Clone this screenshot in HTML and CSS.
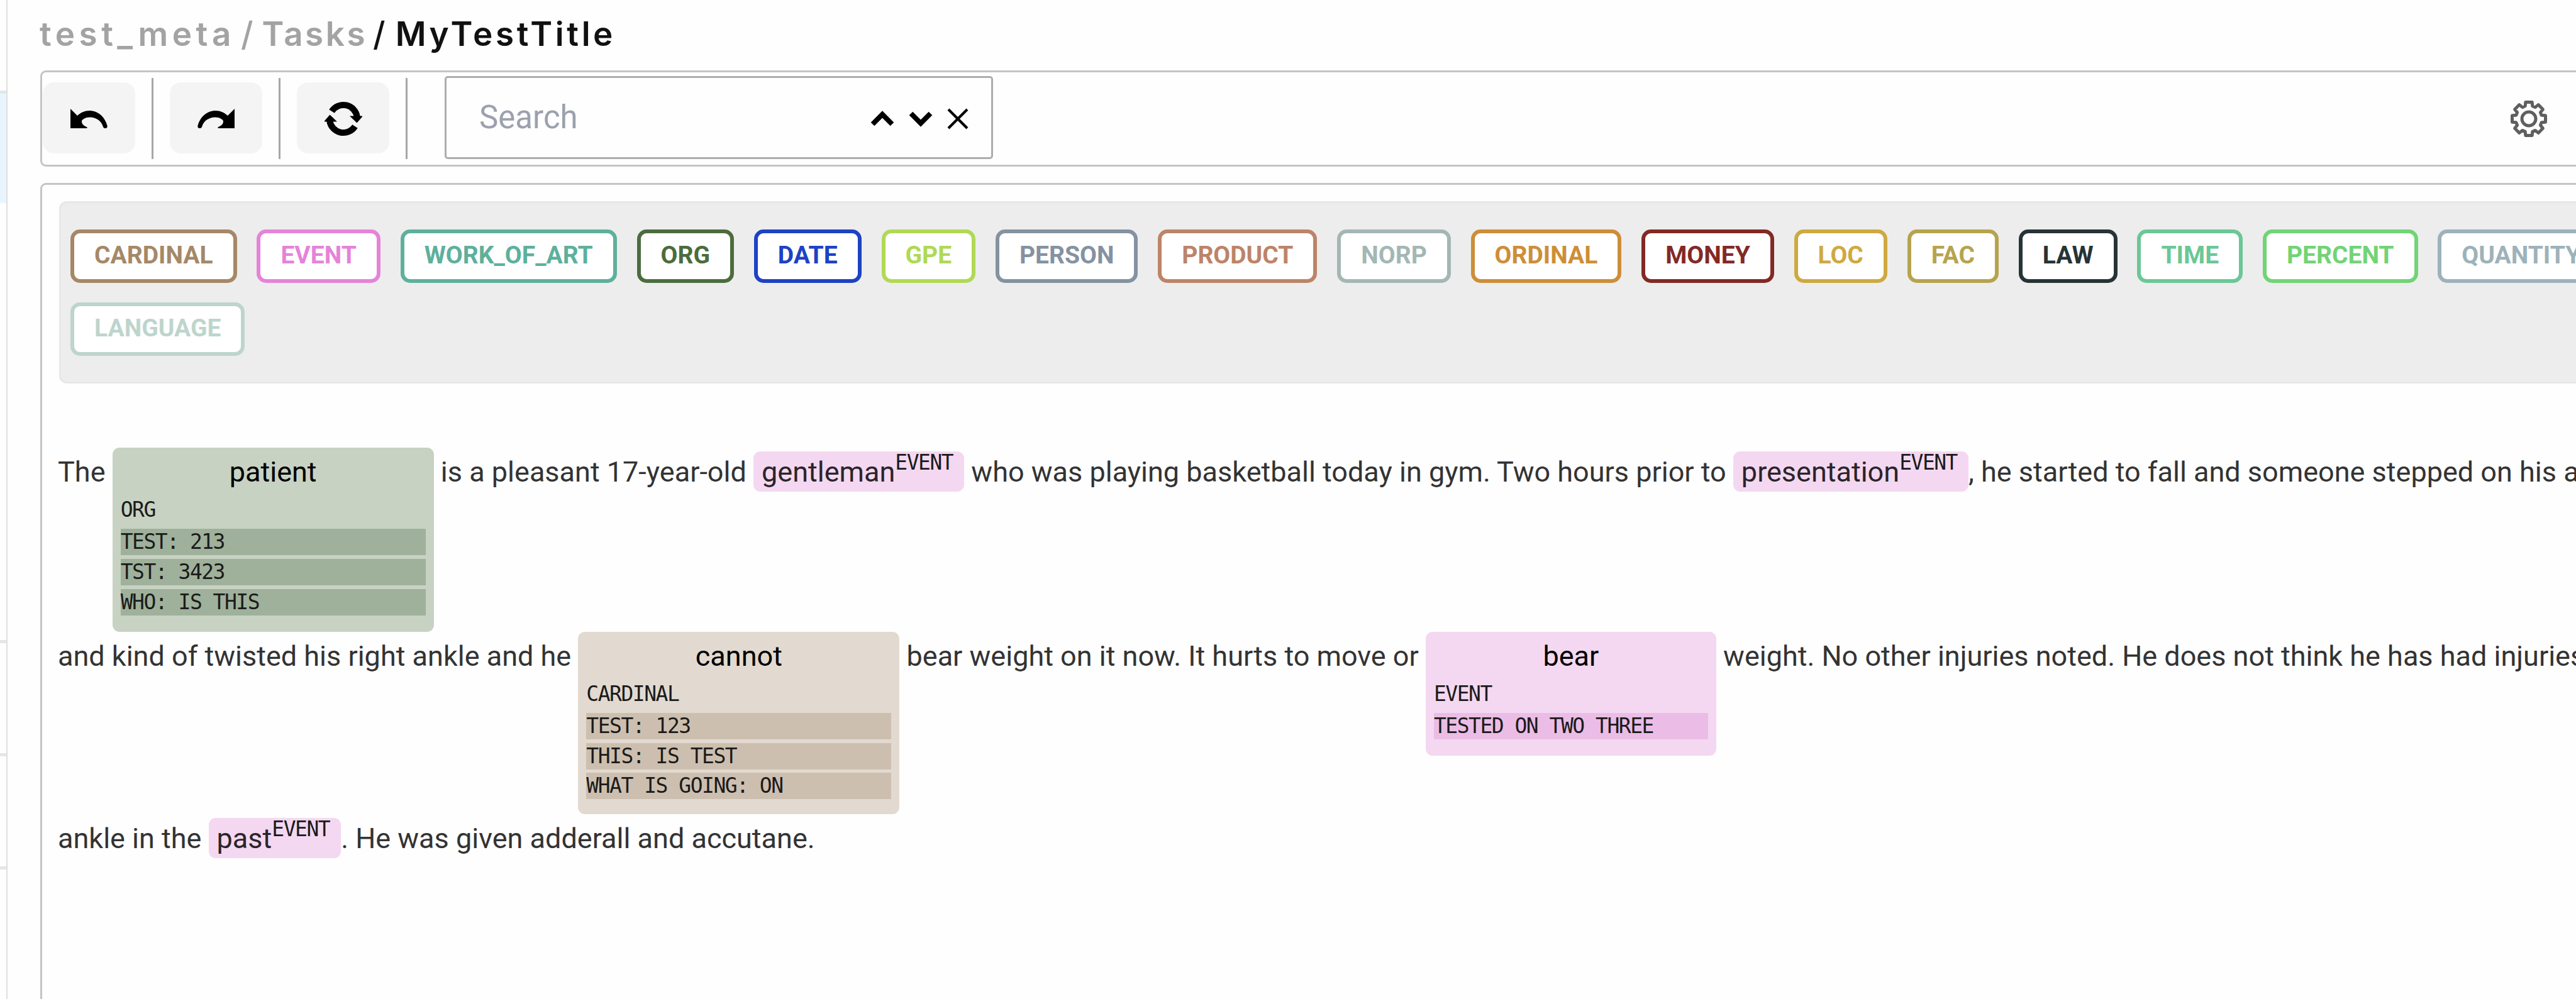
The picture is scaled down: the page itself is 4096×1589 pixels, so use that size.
FILE: index.html
```html
<!DOCTYPE html>
<html lang="en">
<head>
<meta charset="utf-8">
<title>MyTestTitle</title>
<link rel="stylesheet" href="styles.css">
</head>
<body>
<aside class="sidebar">
  <div class="side-item side-first"></div>
  <div class="side-item side-active"></div>
  <div class="side-item side-tall"></div>
  <div class="side-item"></div>
  <div class="side-item"></div>
</aside>
<main class="main">
  <nav class="crumbs">
    <span class="crumb crumb-project">test_meta</span><span class="slash">/</span><span class="crumb">Tasks</span><span class="slash current">/</span><span class="crumb crumb-title current">MyTestTitle</span>
  </nav>

  <div class="toolbar">
    <button class="tool"><svg class="icon-undo" viewBox="0 0 59 31"><path d="M0 0L11 11C16 6 23 2.9 30 2.9C44 2.9 55 13 58.6 27C59 30 57.5 31 55.5 31C53 31 52.2 30 51.5 27.5C49 19 40 13.5 31 13.5C24 13.5 18 17 18 20C18 25 22 27.5 26.4 29V31H0Z"/></svg></button>
    <span class="divider"></span>
    <button class="tool"><svg class="icon-undo icon-redo" viewBox="0 0 59 31"><path d="M0 0L11 11C16 6 23 2.9 30 2.9C44 2.9 55 13 58.6 27C59 30 57.5 31 55.5 31C53 31 52.2 30 51.5 27.5C49 19 40 13.5 31 13.5C24 13.5 18 17 18 20C18 25 22 27.5 26.4 29V31H0Z"/></svg></button>
    <span class="divider"></span>
    <button class="tool"><svg class="icon-sync" viewBox="-30 -30 60 60"><path d="M-18.5 -12A22 22 0 0 1 21.8 -3M18.5 12A22 22 0 0 1 -21.8 3" fill="none" stroke="#000" stroke-width="10"/><path d="M10 -4.5H31L21.5 6.5ZM-10 4.5H-31L-21.5 -6.5Z"/></svg></button>
    <span class="divider"></span>
    <div class="search">
      <span class="search-text">Search</span>
      <svg class="icon-chevron" viewBox="0 0 38 26"><path d="M3.5 21.5L19 6L34.5 21.5" fill="none" stroke="#000" stroke-width="8"/></svg>
      <svg class="icon-chevron" viewBox="0 0 38 26"><path d="M3.5 4.5L19 20L34.5 4.5" fill="none" stroke="#000" stroke-width="8"/></svg>
      <svg class="icon-close" viewBox="0 0 34 34"><path d="M2 2L32 32M32 2L2 32" fill="none" stroke="#000" stroke-width="4.2"/></svg>
    </div>
    <svg class="icon-gear" viewBox="-30 -30 60 60" fill="none" stroke="#5f5f5f" stroke-width="5" stroke-linejoin="round"><path d="M-5.8 -20.2L-5.2 -26.5H5.2L5.8 -20.2L10.2 -18.4L15.1 -22.4L22.4 -15.1L18.4 -10.2L20.2 -5.8L26.5 -5.2V5.2L20.2 5.8L18.4 10.2L22.4 15.1L15.1 22.4L10.2 18.4L5.8 20.2L5.2 26.5H-5.2L-5.8 20.2L-10.2 18.4L-15.1 22.4L-22.4 15.1L-18.4 10.2L-20.2 5.8L-26.5 5.2V-5.2L-20.2 -5.8L-18.4 -10.2L-22.4 -15.1L-15.1 -22.4L-10.2 -18.4Z"/><circle r="11"/></svg>
  </div>

  <section class="panel">
    <div class="tags">
      <div class="tag-row">
        <span class="tag cardinal">CARDINAL</span>
        <span class="tag event">EVENT</span>
        <span class="tag work">WORK_OF_ART</span>
        <span class="tag org">ORG</span>
        <span class="tag date">DATE</span>
        <span class="tag gpe">GPE</span>
        <span class="tag person">PERSON</span>
        <span class="tag product">PRODUCT</span>
        <span class="tag norp">NORP</span>
        <span class="tag ordinal">ORDINAL</span>
        <span class="tag money">MONEY</span>
        <span class="tag loc">LOC</span>
        <span class="tag fac">FAC</span>
        <span class="tag law">LAW</span>
        <span class="tag time">TIME</span>
        <span class="tag percent">PERCENT</span>
        <span class="tag quantity">QUANTITY</span>
      </div>
      <div class="tag-row">
        <span class="tag language">LANGUAGE</span>
      </div>
    </div>

    <div class="document">
      <div class="line">The <span class="note note-org"><span class="word">patient</span><span class="kind">ORG</span><span class="meta">TEST: 213</span><span class="meta">TST: 3423</span><span class="meta">WHO: IS THIS</span></span> is a pleasant 17-year-old <span class="entity">gentleman<span class="sup">EVENT</span></span> who was playing basketball today in gym. Two hours prior to <span class="entity">presentation<span class="sup">EVENT</span></span>, he started to fall and someone stepped on his a</div>
      <div class="line">and kind of twisted his right ankle and he <span class="note note-cardinal"><span class="word">cannot</span><span class="kind">CARDINAL</span><span class="meta">TEST: 123</span><span class="meta">THIS: IS TEST</span><span class="meta">WHAT IS GOING: ON</span></span> bear weight on it now. It hurts to move or <span class="note note-event"><span class="word">bear</span><span class="kind">EVENT</span><span class="meta">TESTED ON TWO THREE</span></span> weight. No other injuries noted. He does not think he has had injuries</div>
      <div class="line">ankle in the <span class="entity">past<span class="sup">EVENT</span></span>. He was given adderall and accutane.</div>
    </div>
  </section>
</main>
</body>
</html>
```
FILE: styles.css
```css
* { box-sizing: border-box; }

body {
  margin: 0;
  width: 4096px;
  height: 1589px;
  display: flex;
  overflow: hidden;
  background: #fefefe;
  font-family: Roboto, "Liberation Sans", sans-serif;
}

/* Sidebar edge */
.sidebar {
  flex: none;
  width: 12px;
  border-right: 2px solid #dfdfdf;
}
.side-item { height: 180px; border-bottom: 5px solid #e6e6e6; }
.side-first { height: 149px; }
.side-active { height: 174px; background: #e8f5fe; border-bottom: 0; }
.side-tall { height: 700px; }

.main {
  flex: none;
  width: 4104px;
  padding-left: 52px;
  display: flex;
  flex-direction: column;
}

/* Breadcrumbs */
.crumbs {
  height: 112px;
  padding-top: 24px;
  display: flex;
  font: 600 53px/60px Inter, sans-serif;
  color: #a3a3a3;
}
.crumb { letter-spacing: 3.5px; }
.crumb-project { margin-left: -1px; letter-spacing: 6.5px; }
.crumb-title { margin-left: 2px; letter-spacing: 4.6px; }
.current { color: #111; }
.slash { margin: 0 14px 0 9px; font-weight: 500; }

/* Toolbar */
.toolbar {
  height: 153px;
  border: 3px solid #c4c4c4;
  border-radius: 9px;
  padding-right: 62px;
  display: flex;
  align-items: center;
}
.tool {
  width: 147px;
  height: 113px;
  margin: 0 0 3px 1px;
  padding: 3px 0 0;
  border: 0;
  border-radius: 18px;
  background: #f4f4f4;
  display: flex;
  align-items: center;
  justify-content: center;
}
.divider {
  width: 3px;
  height: 129px;
  margin: 0 25px 0 26px;
  background: #a6a6a6;
}
.icon-undo { width: 59px; height: 31px; }
.icon-redo { transform: scaleX(-1); }
.icon-sync { width: 60px; height: 60px; }

.search {
  width: 872px;
  height: 132px;
  margin: 0 0 3px 34px;
  padding: 0 36px 0 52px;
  border: 3px solid #adadad;
  border-radius: 5px;
  display: flex;
  align-items: center;
}
.search-text {
  margin-right: auto;
  font-size: 51px;
  line-height: 60px;
  color: #9ba1ae;
}
.icon-chevron { width: 38px; height: 26px; margin: 3px 23px 0 0; }
.icon-close { width: 34px; height: 34px; margin-top: 3px; }
.icon-gear { width: 60px; height: 60px; margin-left: auto; }

/* Annotation panel */
.panel {
  flex: 1;
  margin-top: 26px;
  padding: 26px 0 0 27px;
  border: 3px solid #c4c4c4;
  border-bottom: 0;
  border-radius: 9px 0 0 0;
}
.tags {
  height: 290px;
  padding: 42px 15px;
  border: 3px solid #e7e7e7;
  border-radius: 12px;
  background: #ededed;
  display: flex;
  flex-direction: column;
  gap: 31px;
}
.tag-row { display: flex; gap: 31.8px; }
.tag {
  flex: none;
  height: 85px;
  padding: 0 32px;
  border: 6px solid currentColor;
  border-radius: 15px;
  background: #fff;
  font-size: 39px;
  font-weight: 700;
  line-height: 71px;
}
.cardinal { color: #a58867; }
.event { color: #e583d9; }
.work { color: #5eb09c; }
.org { color: #4c6c3c; }
.date { color: #1d42c4; }
.gpe { color: #b0d954; }
.person { color: #8492a1; }
.product { color: #bd8468; }
.norp { color: #a3b7b4; }
.ordinal { color: #cd8e38; }
.money { color: #832925; }
.loc { color: #cfa940; }
.fac { color: #b5a44e; }
.law { color: #263437; }
.time { color: #6bc796; }
.percent { color: #71d475; }
.quantity { color: #9db2ba; }
.language { color: #bdd5cc; }

/* Annotated text */
.document {
  margin-top: 102px;
  margin-left: -2px;
  font-size: 45px;
  line-height: 78px;
  color: #333;
}
.line { white-space: nowrap; }
.entity {
  padding: 6px 13px 5px;
  border-radius: 11px;
  background: #f4d8f1;
  color: #2b2429;
}
.sup, .kind, .meta {
  font-family: "DejaVu Sans Mono", monospace;
  font-size: 33px;
  letter-spacing: -1.5px;
  color: #1b1b1b;
}
.sup {
  margin-right: 5px;
  vertical-align: 19px;
  line-height: 0;
}
.note {
  display: inline-flex;
  flex-direction: column;
  width: 511px;
  height: 293px;
  padding: 0 13px;
  border-radius: 11px;
}
.word { text-align: center; color: #000; }
.kind { height: 51px; line-height: 42px; }
.meta { height: 42px; margin-bottom: 6px; line-height: 42px; }
.note-org { background: #c8d2c3; }
.note-org .meta { background: #9fb09b; }
.note-cardinal { height: 290px; background: #e2dad0; }
.note-cardinal .meta { background: #cdbfaf; margin-bottom: 5.5px; }
.note-event { width: 462px; height: 197px; background: #f4d8f1; }
.note-event .meta { background: #ebbde6; }
```
